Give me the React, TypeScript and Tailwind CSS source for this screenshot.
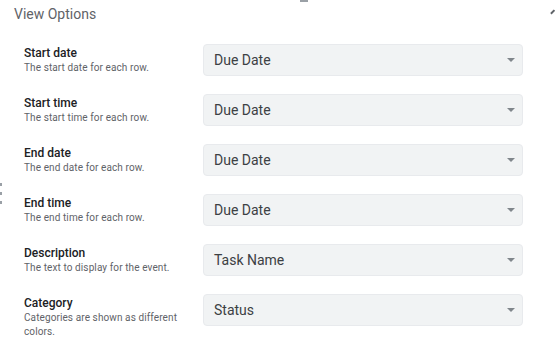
import { useState } from 'react';

type Row = {
  label: string;
  help: string;
  value: string;
};

const rows: Row[] = [
  { label: 'Start date', help: 'The start date for each row.', value: 'Due Date' },
  { label: 'Start time', help: 'The start time for each row.', value: 'Due Date' },
  { label: 'End date', help: 'The end date for each row.', value: 'Due Date' },
  { label: 'End time', help: 'The end time for each row.', value: 'Due Date' },
  { label: 'Description', help: 'The text to display for the event.', value: 'Task Name' },
  { label: 'Category', help: 'Categories are shown as different colors.', value: 'Status' },
];

function OptionRow({ row }: { row: Row }) {
  const [value] = useState(row.value);

  return (
    <div className="flex items-start h-[50px]">
      <div className="w-[203px] shrink-0 pl-[24px] pt-[1px] pr-[19px]">
        <div className="text-[12px] leading-[16px] font-medium text-[#202124]">{row.label}</div>
        <div className="text-[10px] leading-[14px] text-[#5f6368] tracking-[0.1px]">{row.help}</div>
      </div>
      <button className="w-[320px] shrink-0 h-[32px] rounded-[4px] bg-[#f1f3f4] border border-[#e8eaed] flex items-center justify-between pl-[10px] pr-[7px] text-left">
        <span className="text-[14px] text-[#3c4043]">{value}</span>
        <span className="w-0 h-0 border-l-[4px] border-r-[4px] border-t-[4px] border-l-transparent border-r-transparent border-t-[#80868b]" />
      </button>
    </div>
  );
}

export default function App() {
  return (
    <div className="relative w-[556px] h-[354px] bg-white overflow-hidden font-['Roboto',sans-serif]">
      {/* bits of the window behind, cut off at the edges */}
      <div className="absolute left-[300px] top-0 w-[8px] h-[2px] bg-[#9aa0a6]" />
      <div className="absolute right-[1px] top-[11px] w-[5px] h-[1.5px] bg-[#5f6368] -rotate-45" />
      <div className="absolute left-0 top-[183px] flex flex-col gap-[6px]">
        <span className="w-[2px] h-[3px] bg-[#9aa0a6]" />
        <span className="w-[2px] h-[3px] bg-[#9aa0a6]" />
        <span className="w-[2px] h-[3px] bg-[#9aa0a6]" />
      </div>

      <div className="pl-[14px] pt-[4px] h-[44px] text-[14px] leading-[20px] text-[#5f6368]">View Options</div>

      <div className="flex flex-col">
        {rows.map((row) => (
          <OptionRow key={row.label} row={row} />
        ))}
      </div>
    </div>
  );
}
